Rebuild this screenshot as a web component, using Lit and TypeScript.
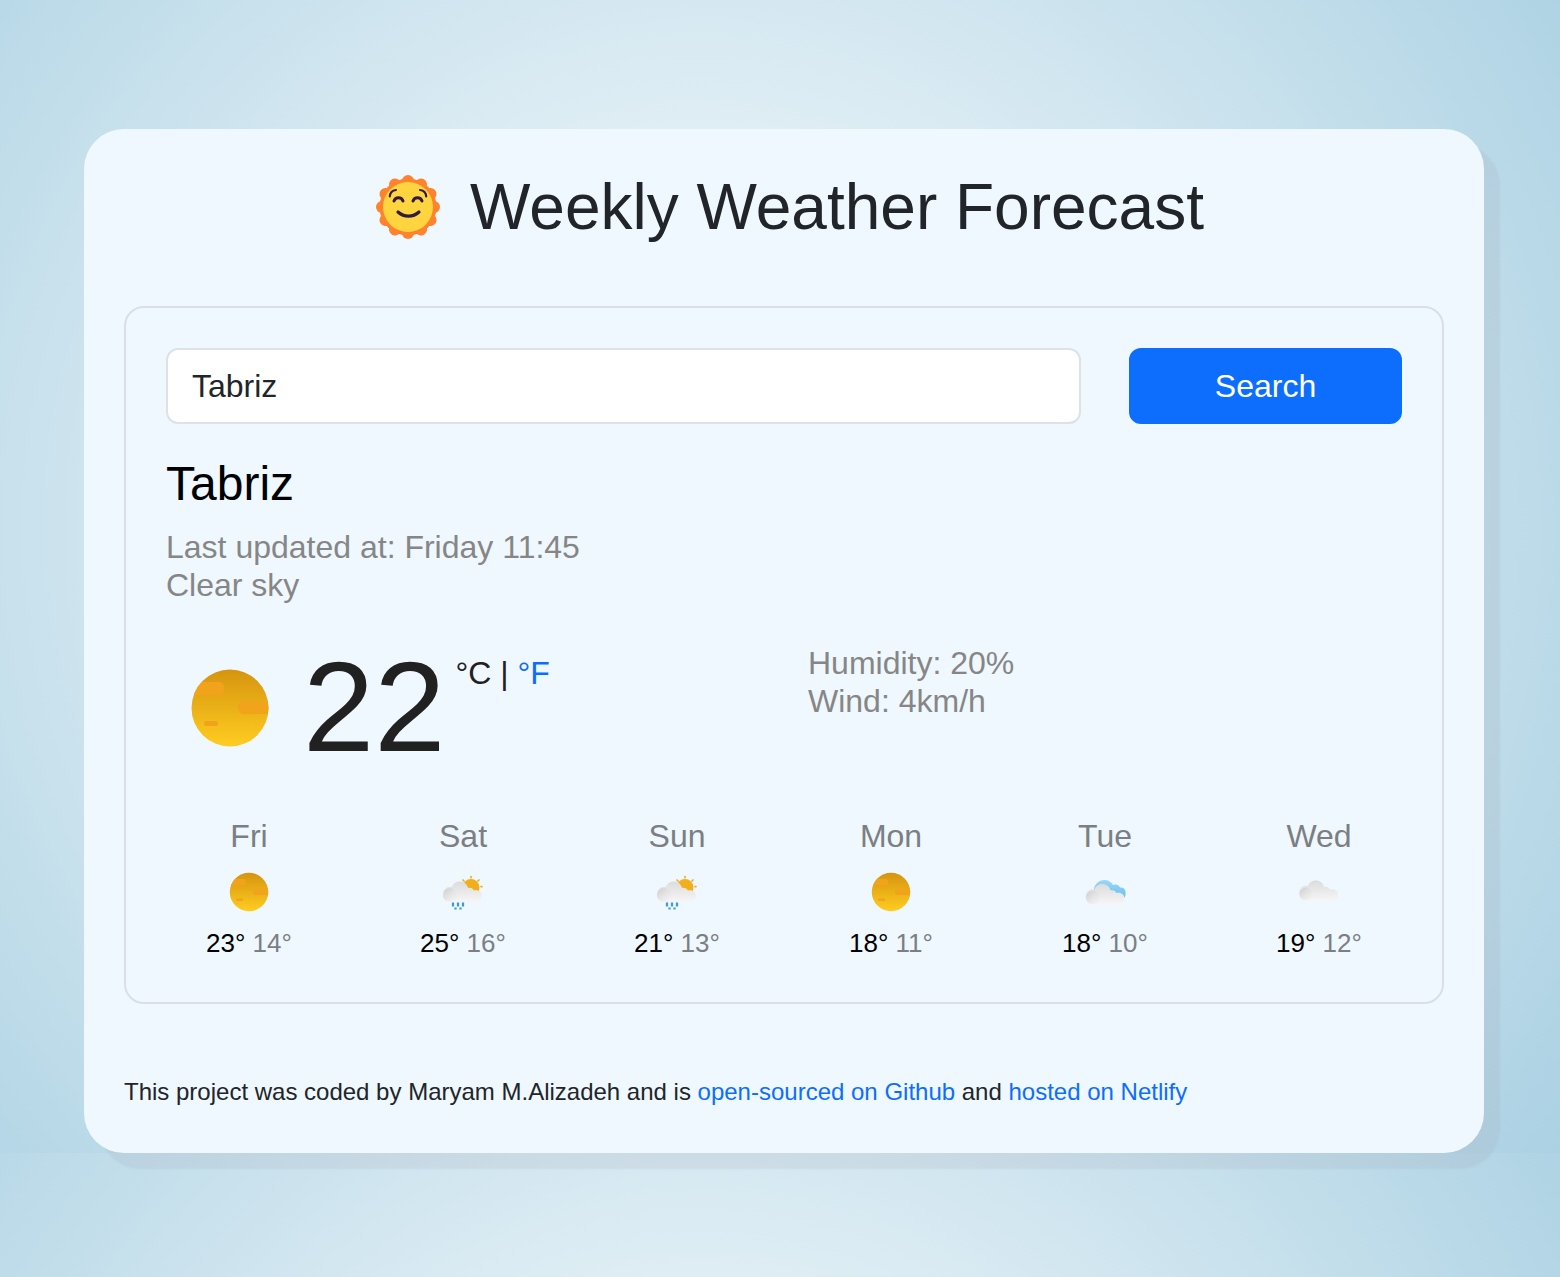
import { LitElement, html, svg, css } from "lit";
import { customElement, property, state } from "lit/decorators.js";

type Sky = "clear" | "showers" | "broken" | "scattered";

interface Day {
  name: string;
  sky: Sky;
  max: number;
  min: number;
}

const FORECAST: Day[] = [
  { name: "Fri", sky: "clear", max: 23, min: 14 },
  { name: "Sat", sky: "showers", max: 25, min: 16 },
  { name: "Sun", sky: "showers", max: 21, min: 13 },
  { name: "Mon", sky: "clear", max: 18, min: 11 },
  { name: "Tue", sky: "broken", max: 18, min: 10 },
  { name: "Wed", sky: "scattered", max: 19, min: 12 },
];

const CLOUD = "M24 49H76C84 49 89 43 89 37C89 29 82 24 73 26C70 21 65 20 61 21C59 13 53 8 44 8C36 8 30 13 29 19C19 17 11 24 11 34C11 43 16 49 24 49Z";

@customElement("weather-icon")
export class WeatherIcon extends LitElement {
  @property() sky: Sky = "clear";

  static styles = css`
    :host { display: block; }
    svg { display: block; width: 100%; height: 100%; }
  `;

  private clear() {
    return svg`
      <clipPath id="disc"><circle cx="64" cy="64" r="38.5" /></clipPath>
      <circle cx="64" cy="64" r="38.5" fill="url(#sun)" />
      <g clip-path="url(#disc)" fill="#f0a31b">
        <rect x="20" y="38" width="38" height="13" rx="5" />
        <rect x="72" y="57" width="40" height="13" rx="6" />
        <rect x="38" y="77" width="14" height="5" rx="2" />
      </g>`;
  }

  private showers() {
    return svg`
      <g stroke="#f0ad22" stroke-width="3.500" stroke-linecap="round">
        <path d="M80 33V35M64 40L66 42M96 40L94 42M100 53H102" />
      </g>
      <circle cx="80" cy="55" r="17" fill="#f2ae1b" />
      <g transform="translate(13 35)">
        <path d=${CLOUD} fill="url(#cloud)" />
        <circle cx="25" cy="35" r="14" fill="url(#puff)" />
      </g>
      <g stroke="#3d9ad6" stroke-width="4.500">
        <path d="M44 85V93M54 85V93M64 85V93M49 95V99M59 95V99" />
      </g>`;
  }

  private broken() {
    return svg`
      <path d="M42 70V60C42 48 53 40 63 40C71 40 77 44 80 50C86 47 92 50 94 55C101 54 105 58 105 64V70C104 75 101 78 96 78Z" fill="url(#blue)" />
      <g transform="translate(14 40)">
        <path d=${CLOUD} fill="url(#cloud)" />
        <circle cx="26" cy="35" r="14" fill="url(#puff)" />
      </g>`;
  }

  private scattered() {
    return svg`
      <g transform="translate(13 33)">
        <path d=${CLOUD} fill="url(#cloud)" />
        <circle cx="25" cy="35" r="13" fill="url(#puff)" />
      </g>`;
  }

  render() {
    return html`
      <svg viewBox="0 0 128 128" aria-hidden="true">
        <defs>
          <linearGradient id="sun" x1="0" y1="0" x2="0" y2="1">
            <stop offset="0" stop-color="#d6940f" />
            <stop offset="1" stop-color="#ffcd20" />
          </linearGradient>
          <linearGradient id="cloud" x1="0" y1="0" x2="0" y2="1">
            <stop offset="0" stop-color="#dcdcdd" />
            <stop offset="1" stop-color="#f7f6f6" />
          </linearGradient>
          <linearGradient id="puff" x1="0" y1="0" x2="1" y2="1">
            <stop offset="0" stop-color="#cbcbcd" />
            <stop offset="0.9" stop-color="#eeeeef" stop-opacity="0.3" />
          </linearGradient>
          <linearGradient id="blue" x1="0" y1="0" x2="0" y2="1">
            <stop offset="0" stop-color="#9ad8f6" />
            <stop offset="1" stop-color="#6bbdf2" />
          </linearGradient>
        </defs>
        ${this[this.sky]()}
      </svg>
    `;
  }
}

@customElement("app-root")
export class AppRoot extends LitElement {
  @state() private city = "Tabriz";

  static styles = css`
    :host {
      display: block;
      box-sizing: border-box;
      min-height: 100vh;
      padding: 129px 76px 124px 84px;
      background: radial-gradient(circle at 45% 46%, #ffffff, #abd1e3) 0 0 / 100% 1153px;
      font-family: "Liberation Sans", Arial, sans-serif;
      font-size: 32px;
      line-height: 38px;
      color: #212529;
    }
    * { box-sizing: border-box; }
    h1, h2, ul, p { margin: 0; padding: 0; font-weight: 400; }
    ul { list-style: none; color: #868686; }
    a { color: #0d6efd; text-decoration: none; }
    .card {
      max-width: 1400px;
      margin: 0 auto;
      padding: 40px 40px 42px;
      border-radius: 40px;
      background: #eff8ff;
      box-shadow: 16px 16px 2px rgba(160, 160, 176, 0.17);
    }
    .title {
      display: flex;
      align-items: flex-start;
      justify-content: center;
      margin-bottom: 60px;
      font-size: 64px;
      line-height: 77px;
    }
    .logo { width: 64px; height: 64px; margin: 6px 30px 0 12px; }
    .panel {
      padding: 40px;
      border: 2px solid #d9dee8;
      border-radius: 20px;
    }
    .search {
      display: grid;
      grid-template-columns: repeat(12, 1fr);
      gap: 48px;
      margin-bottom: 31px;
    }
    .field, .submit {
      min-width: 0;
      margin: 0;
      padding: 12px 24px;
      border-radius: 12px;
      font: inherit;
      line-height: 48px;
    }
    .field {
      grid-column: span 9;
      height: 76px;
      border: 2px solid #dee2e6;
      background: #fff;
      color: #212529;
    }
    .submit {
      grid-column: span 3;
      border: 2px solid #0d6efd;
      background: #0d6efd;
      color: #fff;
    }
    .city {
      margin-bottom: 15px;
      font-size: 48px;
      line-height: 58px;
      color: #000;
    }
    .now {
      display: grid;
      grid-template-columns: 1fr 1fr;
      gap: 48px;
      margin-top: 40px;
      margin-bottom: 45px;
    }
    .reading { display: flex; align-items: flex-start; color: #212121; }
    .big-icon { width: 128px; height: 128px; margin-right: 9px; }
    .degrees { font-size: 128px; line-height: 126px; }
    .units { margin: 10px 0 0 10px; }
    .days {
      display: grid;
      grid-template-columns: repeat(6, 1fr);
      gap: 48px;
      text-align: center;
      color: #7b7e83;
    }
    .day-icon { width: 64px; height: 64px; margin: 5px auto 0; }
    .temps { font-size: 26px; }
    .max { color: #000; }
    .credit { margin-top: 69px; font-size: 24px; }
  `;

  private logo() {
    const petals = Array.from({ length: 12 }, (_, i) => i * 30);
    return html`
      <svg class="logo" viewBox="0 0 64 64" aria-hidden="true">
        <g fill="#ff822d">
          <circle cx="32" cy="32" r="28.5" />
          ${petals.map((a) => svg`<circle cx="32" cy="6" r="6" transform="rotate(${a} 32 32)" />`)}
        </g>
        <circle cx="32" cy="32" r="25" fill="#ffd53f" />
        <g fill="none" stroke="#321b41" stroke-linecap="round">
          <path d="M18 26C19.500 21.500 25.500 21.500 27 26M37 26C38.500 21.500 44.500 21.500 46 26" stroke-width="3" />
          <path d="M22 37C28 42.500 37 42.500 43 37" stroke-width="3.200" />
          <path d="M13.800 21.500C14 18 16.500 15.500 20 15M44 15C47.500 15.500 50 18 50.200 21.500" stroke-width="2.200" />
        </g>
      </svg>
    `;
  }

  render() {
    return html`
      <main class="card">
        <h1 class="title">${this.logo()}Weekly Weather Forecast</h1>
        <section class="panel">
          <form class="search" @submit=${(e: Event) => e.preventDefault()}>
            <input class="field" type="text" aria-label="City" .value=${this.city} />
            <button class="submit" type="submit">Search</button>
          </form>
          <h2 class="city">${this.city}</h2>
          <ul>
            <li>Last updated at: Friday 11:45</li>
            <li>Clear sky</li>
          </ul>
          <div class="now">
            <div class="reading">
              <weather-icon class="big-icon" sky="clear"></weather-icon>
              <span class="degrees">22</span>
              <span class="units">°C | <a href="#">°F</a></span>
            </div>
            <ul>
              <li>Humidity: 20%</li>
              <li>Wind: 4km/h</li>
            </ul>
          </div>
          <div class="days">
            ${FORECAST.map(
              (d) => html`
                <div>
                  <div>${d.name}</div>
                  <weather-icon class="day-icon" sky=${d.sky}></weather-icon>
                  <div class="temps"><span class="max">${d.max}°</span> ${d.min}°</div>
                </div>
              `
            )}
          </div>
        </section>
        <p class="credit">
          This project was coded by Maryam M.Alizadeh and is
          <a href="#">open-sourced on Github</a> and <a href="#">hosted on Netlify</a>
        </p>
      </main>
    `;
  }
}
